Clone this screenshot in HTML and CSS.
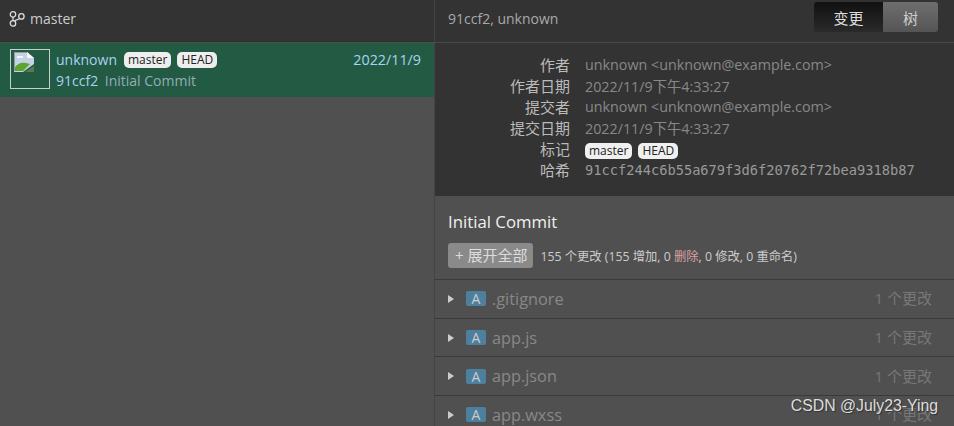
FILE: index.html
```html
<!DOCTYPE html>
<html lang="zh-CN">
<head>
    <meta charset="UTF-8">
    <title>Commit History</title>
    <link rel="stylesheet" href="styles.css">
</head>
<body>
    <div class="app">
        <div class="history">
            <div class="branch-bar">
                <svg class="branch-icon" width="16" height="16" viewBox="0 0 16 16" fill="none" stroke="#ddd" stroke-width="1.3">
                    <circle cx="4" cy="3.4" r="2.7"/>
                    <circle cx="4" cy="12.4" r="2.7"/>
                    <circle cx="12.4" cy="5.4" r="2.7"/>
                    <path d="M4 6.1v3.6M5.6 10.2c1.2-1.6 3-1.4 4.4-2.2"/>
                </svg>
                <span>master</span>
            </div>
            <div class="commit-row">
                <div class="avatar">
                    <svg width="20" height="20" viewBox="0 0 20 20">
                        <path d="M0 0h13l7 6v6L9 20H0z" fill="#c4d2e6"/>
                        <path d="M0 0h13v1H1v18H0z" fill="#999"/>
                        <path d="M13 0v6h7z" fill="#f6f6f6"/>
                        <path d="M1 19v-4c3-4 7-5 11-4l4 1-7 7z" fill="#5da32f"/>
                        <path d="M11 20l9-6v6z" fill="#5a7a4a"/>
                        <path d="M3 4h6v2H3z" fill="#f2f5fa"/>
                    </svg>
                </div>
                <div class="commit-text">
                    <div class="commit-top">
                        <span class="author">unknown</span>
                        <span class="tag">master</span>
                        <span class="tag">HEAD</span>
                        <span class="commit-date">2022/11/9</span>
                    </div>
                    <div class="commit-bottom">
                        <span class="short-hash">91ccf2</span>
                        <span class="subject">Initial Commit</span>
                    </div>
                </div>
            </div>
        </div>
        <div class="details">
            <div class="details-bar">
                <span class="details-title">91ccf2, unknown</span>
                <div class="toggle">
                    <span class="toggle-item toggle-dark">变更</span>
                    <span class="toggle-item toggle-light">树</span>
                </div>
            </div>
            <div class="meta">
                <div class="meta-label">作者</div>
                <div class="meta-value">unknown &lt;unknown@example.com&gt;</div>
                <div class="meta-label">作者日期</div>
                <div class="meta-value">2022/11/9下午4:33:27</div>
                <div class="meta-label">提交者</div>
                <div class="meta-value">unknown &lt;unknown@example.com&gt;</div>
                <div class="meta-label">提交日期</div>
                <div class="meta-value">2022/11/9下午4:33:27</div>
                <div class="meta-label">标记</div>
                <div class="meta-value meta-tags"><span class="tag">master</span><span class="tag">HEAD</span></div>
                <div class="meta-label">哈希</div>
                <div class="meta-value meta-hash">91ccf244c6b55a679f3d6f20762f72bea9318b87</div>
            </div>
            <div class="summary">
                <h1>Initial Commit</h1>
                <div class="summary-line">
                    <span class="expand-btn">+ 展开全部</span>
                    <span class="stats">155 个更改 (155 增加, 0 <span class="deleted">删除</span>, 0 修改, 0 重命名)</span>
                </div>
            </div>
            <div class="file-row">
                <span class="arrow"></span><span class="badge">A</span><span class="file-name">.gitignore</span><span class="file-count">1 个更改</span>
            </div>
            <div class="file-row">
                <span class="arrow"></span><span class="badge">A</span><span class="file-name">app.js</span><span class="file-count">1 个更改</span>
            </div>
            <div class="file-row">
                <span class="arrow"></span><span class="badge">A</span><span class="file-name">app.json</span><span class="file-count">1 个更改</span>
            </div>
            <div class="file-row">
                <span class="arrow"></span><span class="badge">A</span><span class="file-name">app.wxss</span><span class="file-count">1 个更改</span>
            </div>
        </div>
        <div class="watermark">CSDN @July23-Ying</div>
    </div>
</body>
</html>
```

FILE: styles.css
```css
html, body {
    margin: 0;
    height: 100%;
    overflow: hidden;
}
body {
    font-family: "Open Sans", "Noto Sans CJK SC", sans-serif;
    font-size: 14px;
    background-color: #505050;
    color: #ccc;
}
.app {
    position: relative;
    display: flex;
    height: 426px;
    overflow: hidden;
}
.history {
    width: 434px;
    flex-shrink: 0;
    border-right: 1px solid #444;
    background-color: #505050;
}
.branch-bar {
    display: flex;
    align-items: center;
    gap: 5px;
    height: 42px;
    padding: 0 0 4px 9px;
    background-color: #333;
    border-bottom: 1px solid #2e2e2e;
    box-sizing: border-box;
    color: #ccc;
    font-size: 14px;
}
.commit-row {
    display: flex;
    height: 54px;
    margin-top: 1px;
    padding: 6px 13px 0 10px;
    box-sizing: border-box;
    background-color: #235a44;
}
.avatar {
    width: 35px;
    height: 36px;
    flex-shrink: 0;
    border: 1px solid #c6cfca;
    margin-right: 6px;
    padding: 2px 0 0 3px;
}
.commit-text {
    flex: 1;
    line-height: 21px;
}
.commit-top {
    display: flex;
    align-items: center;
    height: 21px;
}
.author {
    color: #a8d4ee;
    margin-right: 7px;
}
.tag {
    display: inline-block;
    padding: 0 4px;
    margin-right: 6px;
    height: 16px;
    line-height: 16px;
    font-size: 12px;
    color: #222;
    background-color: #eee;
    border-radius: 5px;
}
.commit-date {
    margin-left: auto;
    font-size: 14.3px;
    color: #a8d4ee;
}
.commit-bottom {
    height: 21px;
}
.short-hash {
    color: #a8d4ee;
    margin-right: 3px;
}
.subject {
    color: #93adb5;
}
.details {
    flex: 1;
    min-width: 0;
}
.details-bar {
    display: flex;
    align-items: center;
    justify-content: space-between;
    height: 43px;
    padding: 0 16px 0 13px;
    box-sizing: border-box;
    background-color: #333;
    border-bottom: 1px solid #484848;
}
.details-title {
    margin-top: -6px;
    color: #aaa;
    font-size: 14px;
}
.toggle {
    display: flex;
    height: 30px;
    margin-top: -8px;
    border-radius: 3px;
    overflow: hidden;
    font-size: 15px;
}
.toggle-item {
    display: flex;
    align-items: center;
    justify-content: center;
}
.toggle-dark {
    width: 69px;
    color: #ddd;
    background: linear-gradient(#111, #2a2a2a);
}
.toggle-light {
    width: 55px;
    color: #ccc;
    background: linear-gradient(#6e6e6e, #555);
}
.meta {
    display: grid;
    grid-template-columns: 135px 1fr;
    column-gap: 15px;
    grid-auto-rows: 21px;
    align-items: center;
    height: 153px;
    padding-top: 11px;
    box-sizing: border-box;
    background-color: #333;
    font-size: 14.3px;
}
.meta-label {
    text-align: right;
    font-size: 15px;
    color: #bbb;
}
.meta-value {
    color: #888;
}
.meta-tags {
    display: flex;
    padding-top: 5px;
}
.meta-tags .tag {
    background-color: #f0f0f0;
}
.meta-hash {
    font-family: "DejaVu Sans Mono", monospace;
    font-size: 13.7px;
    color: #999;
}
.summary {
    height: 83px;
    padding: 15px 13px 0;
    box-sizing: border-box;
    background-color: #505050;
}
.summary h1 {
    margin: 0;
    font-size: 16.8px;
    font-weight: 400;
    line-height: 22px;
    color: #f0f0f0;
}
.summary-line {
    display: flex;
    align-items: center;
    gap: 7px;
    margin-top: 10px;
}
.expand-btn {
    display: inline-block;
    height: 25px;
    line-height: 25px;
    padding: 0 6px 0 7px;
    border-radius: 3px;
    background-color: #8a8a8a;
    color: #ddd;
    font-size: 15px;
}
.stats {
    margin-top: 1px;
    font-size: 12.3px;
    color: #ccc;
}
.deleted {
    color: #d9a0a0;
}
.file-row {
    display: flex;
    align-items: center;
    height: 38.7px;
    padding: 0 22px 0 13px;
    box-sizing: border-box;
    border-top: 1px solid #3a3a3a;
}
.arrow {
    width: 0;
    height: 0;
    border-top: 4.5px solid transparent;
    border-bottom: 4.5px solid transparent;
    border-left: 6px solid #ccc;
    margin-right: 12px;
}
.badge {
    width: 20px;
    height: 15px;
    line-height: 15px;
    text-align: center;
    border-radius: 2px;
    background-color: #4d7f9f;
    color: #ccc;
    font-size: 14px;
    margin-right: 6px;
}
.file-name {
    color: #888;
    font-size: 16.3px;
}
.file-count {
    margin-left: auto;
    margin-top: -2px;
    color: #777;
    font-size: 15px;
}
.watermark {
    position: absolute;
    top: 397px;
    right: 16px;
    color: #ddd;
    font-family: "Liberation Sans", sans-serif;
    font-size: 15.8px;
    text-shadow: 1px 1px 1px #333;
}
```
